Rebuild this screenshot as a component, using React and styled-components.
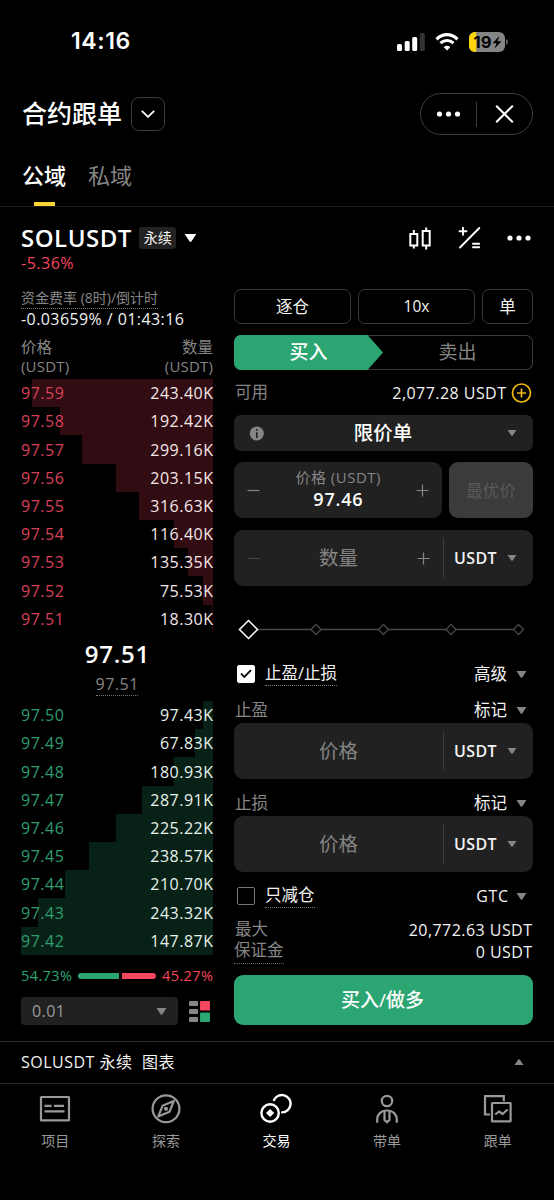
import React from "react";
import styled, { createGlobalStyle } from "styled-components";

const GlobalStyle = createGlobalStyle`
  * {
    box-sizing: border-box;
  }
  body {
    margin: 0;
    background: #000;
  }
`;

const colors = {
  green: "#2ba572",
  red: "#f6465d",
  gray: "#858585",
  panel: "#212121",
  line: "#3a3a3a",
};

const Page = styled.div`
  width: 554px;
  height: 1200px;
  overflow: hidden;
  background: #000;
  color: #f2f2f2;
  font-family: "Open Sans", "Noto Sans CJK SC", sans-serif;
  font-size: 16px;
  line-height: 1;
  white-space: nowrap;
`;

const Text = styled.span`
  display: inline-block;
  font-size: ${(p) => p.$size || 16}px;
  font-weight: ${(p) => p.$weight || 400};
  color: ${(p) => p.$color || "inherit"};
  letter-spacing: ${(p) => p.$spacing || 0}px;
  margin-right: ${(p) => -(p.$spacing || 0)}px;
`;

const Dotted = styled.span`
  display: inline-flex;
  align-items: center;
  height: ${(p) => p.$height || 22}px;
  padding-bottom: ${(p) => p.$lift || 0}px;
  border-bottom: 1px dotted ${(p) => p.$line || "#777"};
`;

const StatusBar = styled.header`
  display: flex;
  align-items: center;
  justify-content: space-between;
  height: 83px;
  padding: 0 46px 0 71px;
  font-family: Inter, sans-serif;
`;

const StatusIcons = styled.div`
  display: flex;
  align-items: center;
  gap: 10px;
`;

const TitleBar = styled.div`
  display: flex;
  align-items: center;
  justify-content: space-between;
  height: 62px;
  padding: 0 21px 0 22px;
`;

const Title = styled.div`
  display: flex;
  align-items: center;
  gap: 9px;
  > span {
    padding-bottom: 2px;
  }
`;

const SquareButton = styled.button`
  display: flex;
  align-items: center;
  justify-content: center;
  width: 34px;
  height: 34px;
  padding: 0;
  border: 1px solid #3d3d3d;
  border-radius: 8px;
  background: none;
`;

const Capsule = styled.div`
  display: flex;
  align-items: center;
  width: 113px;
  height: 42px;
  border: 1px solid #3d3d3d;
  border-radius: 21px;
  > svg {
    flex: 1;
  }
`;

const CapsuleLine = styled.i`
  width: 1px;
  height: 25px;
  background: #3d3d3d;
`;

const Tabs = styled.nav`
  display: flex;
  gap: 22px;
  height: 62px;
  padding-left: 22px;
  border-bottom: 1px solid #1c1c1c;
`;

const Tab = styled.div`
  display: flex;
  flex-direction: column;
  align-items: center;
  justify-content: space-between;
  padding-top: 19px;
  color: ${(p) => (p.$active ? "#fff" : colors.gray)};
  &::after {
    content: "";
    width: 21px;
    height: 4px;
    background: ${(p) => (p.$active ? "#fcd535" : "none")};
  }
`;

const SymbolBar = styled.div`
  display: flex;
  justify-content: space-between;
  height: 82px;
  padding: 18px 23px 0 21px;
`;

const SymbolName = styled.div`
  display: flex;
  align-items: center;
  height: 26px;
  gap: 8px;
`;

const Badge = styled.span`
  display: flex;
  align-items: center;
  justify-content: center;
  width: 37px;
  height: 22px;
  border-radius: 3px;
  background: #222;
`;

const Change = styled.div`
  display: flex;
  align-items: center;
  height: 24px;
`;

const Tools = styled.div`
  display: flex;
  align-items: center;
  height: 26px;
  gap: 26px;
`;

const Columns = styled.main`
  display: flex;
  height: 752px;
  padding: 0 21px;
  gap: 21px;
`;

const Book = styled.section`
  width: 192px;
`;

const Line = styled.div`
  display: flex;
  align-items: center;
  justify-content: ${(p) => (p.$center ? "center" : "space-between")};
  height: ${(p) => p.$height}px;
  margin-top: ${(p) => p.$top || 0}px;
  margin-bottom: ${(p) => p.$bottom || 0}px;
  padding: 0 ${(p) => p.$right || 0}px 0 ${(p) => p.$left || 0}px;
`;

const Depth = styled.div`
  display: flex;
  align-items: center;
  justify-content: space-between;
  height: ${(p) => p.$height}px;
  color: ${(p) => (p.$ask ? "#d9415a" : "#2d9e70")};
  background: linear-gradient(
      ${(p) => (p.$ask ? "#310c12, #310c12" : "#082117, #082117")}
    )
    right / ${(p) => p.$width}px 100% no-repeat;
  b {
    color: ${(p) => (p.$ask ? "#f5e6e8" : "#e6f2ec")};
    font-weight: 400;
  }
`;

const Ratio = styled.div`
  display: flex;
  align-items: center;
  height: 42px;
`;

const RatioBar = styled.div`
  display: flex;
  flex: 1;
  gap: 3px;
  margin: 0 6px;
  height: 6px;
`;

const RatioPart = styled.i`
  flex: ${(p) => p.$share};
  background: ${(p) => p.$color};
  border-radius: ${(p) => (p.$end ? "0 3px 3px 0" : "3px 0 0 3px")};
`;

const StepSelect = styled.div`
  display: flex;
  align-items: center;
  justify-content: space-between;
  width: 157px;
  height: 28px;
  padding: 0 11px;
  border-radius: 4px;
  background: ${colors.panel};
  color: #999;
`;

const Form = styled.section`
  width: 299px;
`;

const Modes = styled.div`
  display: grid;
  grid-template-columns: 117px 117px 51px;
  gap: 7px;
`;

const ModeButton = styled.button`
  display: flex;
  align-items: center;
  justify-content: center;
  height: 35px;
  padding: 0 0 1px;
  border: 1px solid ${colors.line};
  border-radius: 7px;
  background: none;
  color: #f2f2f2;
  font-family: inherit;
`;

const Sides = styled.div`
  display: flex;
  height: 35px;
  margin-top: 11px;
  border-radius: 7px;
  box-shadow: inset 0 0 0 1px ${colors.line};
`;

const Side = styled.div`
  display: flex;
  align-items: center;
  justify-content: center;
  width: 149px;
  color: ${(p) => (p.$active ? "#fff" : colors.gray)};
  background: ${(p) => (p.$active ? colors.green : "none")};
  border-radius: 7px 0 0 7px;
  clip-path: ${(p) =>
    p.$active
      ? "polygon(0 0, 133.5px 0, 100% 50%, 133.5px 100%, 0 100%)"
      : "none"};
`;

const Value = styled.div`
  display: flex;
  align-items: center;
  gap: ${(p) => p.$gap || 6}px;
`;

const OrderType = styled.div`
  display: grid;
  grid-template-columns: 1fr auto 1fr;
  align-items: center;
  height: 36px;
  padding: 0 16px 0 15px;
  border-radius: 7px;
  background: ${colors.panel};
  > :last-child {
    justify-self: end;
  }
`;

const PriceRow = styled.div`
  display: flex;
  gap: 7px;
  margin-top: 11px;
`;

const Field = styled.div`
  display: flex;
  align-items: center;
  width: ${(p) => (p.$narrow ? "208px" : "auto")};
  height: 56px;
  margin-top: ${(p) => p.$top || 0}px;
  border-radius: 9px;
  background: ${colors.panel};
`;

const FieldBody = styled.div`
  display: flex;
  align-items: center;
  justify-content: ${(p) => (p.$center ? "center" : "space-between")};
  width: 209px;
  padding: 0 13px;
`;

const PriceText = styled.div`
  display: flex;
  flex-direction: column;
  align-items: center;
  gap: 5px;
  padding-bottom: 2px;
`;

const Unit = styled.div`
  display: flex;
  align-items: center;
  justify-content: space-between;
  flex: 1;
  height: 40px;
  padding: 0 16px 0 10px;
  border-left: 1px solid #3d3d3d;
`;

const BestPrice = styled.button`
  flex: 1;
  padding: 0;
  border: 0;
  border-radius: 9px;
  background: #3b3b3b;
  font-family: inherit;
`;

const Checkbox = styled.span`
  display: flex;
  align-items: center;
  justify-content: center;
  width: 18px;
  height: 18px;
  margin-left: 3px;
  border: 1px solid ${(p) => (p.$checked ? "#fff" : "#777")};
  border-radius: 2px;
  background: ${(p) => (p.$checked ? "#fff" : "none")};
`;

const Submit = styled.button`
  display: block;
  width: 100%;
  height: 50px;
  margin-top: 11px;
  padding: 0 2px 2px 0;
  border: 0;
  border-radius: 9px;
  background: ${colors.green};
  color: #fff;
  font-family: inherit;
`;

const ChartBar = styled.div`
  display: flex;
  align-items: center;
  justify-content: space-between;
  height: 43px;
  padding: 0 30px 1px 21px;
  border-top: 1px solid #2e2e2e;
  border-bottom: 1px solid #2e2e2e;
`;

const BottomNav = styled.footer`
  display: grid;
  grid-template-columns: repeat(5, 1fr);
  padding-right: 1px;
`;

const NavItem = styled.div`
  display: flex;
  flex-direction: column;
  align-items: center;
  gap: 9px;
  padding-top: 9px;
  color: ${(p) => (p.$active ? "#fff" : "#999")};
  svg {
    fill: none;
    stroke: currentColor;
    stroke-width: 2.2;
  }
`;

const Caret = ({ w = 10, h = 6, color = "#858585", up }) => (
  <svg width={w} height={h} viewBox="0 0 10 6" preserveAspectRatio="none">
    <path
      d={up ? "M.5 6h9L5.7.4Q5 0 4.3.4Z" : "M.5 0h9L5.7 5.6Q5 6 4.3 5.6Z"}
      fill={color}
    />
  </svg>
);

const Dots = ({ width = 24 }) => (
  <svg width={width} height="6" viewBox="0 0 24 6" fill="#fff">
    <circle cx="3" cy="3" r="2.6" />
    <circle cx="12" cy="3" r="2.6" />
    <circle cx="21" cy="3" r="2.6" />
  </svg>
);

const Minus = ({ color = "#858585" }) => (
  <svg width="13" height="13">
    <path d="M.5 6.5h12" stroke={color} strokeWidth="1.2" />
  </svg>
);

const Plus = () => (
  <svg width="13" height="13">
    <path d="M.5 6.5h12M6.5.5v12" stroke="#858585" strokeWidth="1.2" />
  </svg>
);

const Status = () => (
  <StatusIcons>
    <svg width="28" height="18" fill="#fff">
      <rect x="0" y="11" width="5" height="7" rx="1.5" />
      <rect x="7.7" y="8" width="5" height="10" rx="1.5" />
      <rect x="15.2" y="4" width="5" height="14" rx="1.5" />
      <rect x="22.8" y="0" width="5" height="18" rx="1.5" fill="#333" />
    </svg>
    <svg width="24" height="18" viewBox="0 0 24 18">
      <g fill="none" stroke="#fff" strokeWidth="3.2">
        <path d="M1.5 6.2Q6.4 1.7 12 1.7t10.5 4.5" />
        <path d="M5.5 10.2Q8.4 7.5 12 7.5t6.5 2.7" />
      </g>
      <path d="M12 17.4 8.7 14.1Q12 11.3 15.3 14.1Z" fill="#fff" />
    </svg>
    <svg width="39" height="20" viewBox="0 0 39 20">
      <rect width="36" height="20" rx="6" fill="#858585" />
      <path d="M7.2 0H6a6 6 0 0 0-6 6v8a6 6 0 0 0 6 6h1.2Z" fill="#fbd40b" />
      <path d="M37.3 7q1.5 1 1.5 3t-1.5 3Z" fill="#858585" />
      <text
        x="4.5"
        y="15.8"
        fontFamily="Inter"
        fontSize="16"
        fontWeight="700"
        textLength="18"
        lengthAdjust="spacingAndGlyphs"
      >
        19
      </text>
      <path d="m30.5 4-7 7.2h4l-2 5.3 7-7.2h-4Z" />
    </svg>
  </StatusIcons>
);

const asks = [
  ["97.59", "243.40K", 181],
  ["97.58", "192.42K", 153],
  ["97.57", "299.16K", 131],
  ["97.56", "203.15K", 97.5],
  ["97.55", "316.63K", 74.5],
  ["97.54", "116.40K", 39],
  ["97.53", "135.35K", 25.5],
  ["97.52", "75.53K", 10.5],
  ["97.51", "18.30K", 1],
];

const bids = [
  ["97.50", "97.43K", 10.5],
  ["97.49", "67.83K", 18.3],
  ["97.48", "180.93K", 39],
  ["97.47", "287.91K", 71.5],
  ["97.46", "225.22K", 97],
  ["97.45", "238.57K", 124],
  ["97.44", "210.70K", 148],
  ["97.43", "243.32K", 175],
  ["97.42", "147.87K", 192],
];

// rows are 28.2px on average, snapped to whole pixels so the bars join
const rowHeight = (i) => Math.round((i + 1) * 28.2) - Math.round(i * 28.2);

const DepthRows = ({ rows, ask }) =>
  rows.map(([price, amount, width], i) => (
    <Depth key={price} $ask={ask} $width={width} $height={rowHeight(i)}>
      <Text $spacing={0.5}>{price}</Text>
      <b>
        <Text $spacing={0.5}>{amount}</Text>
      </b>
    </Depth>
  ));

const OrderBook = () => (
  <Book>
    <Line $height={20}>
      <Dotted $height={20} $lift={1}>
        <Text $size={14} $color={colors.gray}>
          资金费率 (8时)/倒计时
        </Text>
      </Dotted>
    </Line>
    <Line $height={20}>
      <Text $spacing={0.42}>-0.03659% / 01:43:16</Text>
    </Line>
    <Line $height={22} $top={8}>
      <Text $size={15.5} $color={colors.gray}>
        价格
      </Text>
      <Text $size={15.5} $color={colors.gray}>
        数量
      </Text>
    </Line>
    <Line $height={15} $bottom={5}>
      <Text $size={15} $color={colors.gray} $spacing={0.2}>
        (USDT)
      </Text>
      <Text $size={15} $color={colors.gray} $spacing={0.2}>
        (USDT)
      </Text>
    </Line>
    <DepthRows rows={asks} ask />
    <Line $center $height={42}>
      <Text $size={24} $weight={600} $color="#fff" $spacing={0.8}>
        97.51
      </Text>
    </Line>
    <Line $center $height={21}>
      <Dotted $height={21} $lift={2}>
        <Text $color={colors.gray} $spacing={0.5}>
          97.51
        </Text>
      </Dotted>
    </Line>
    <Line $height={5} />
    <DepthRows rows={bids} />
    <Ratio>
      <Text $size={14.5} $color={colors.green} $spacing={0.4}>
        54.73%
      </Text>
      <RatioBar>
        <RatioPart $share={54.73} $color={colors.green} />
        <RatioPart $share={45.27} $color={colors.red} $end />
      </RatioBar>
      <Text $size={14.5} $color={colors.red} $spacing={0.4}>
        45.27%
      </Text>
    </Ratio>
    <Line $height={28} $right={3}>
      <StepSelect>
        <Text $spacing={0.4}>0.01</Text>
        <Caret w={11} h={7} />
      </StepSelect>
      <svg width="21" height="21">
        <g fill="#858585">
          <rect width="9" height="5" rx="1" />
          <rect y="8" width="9" height="5" rx="1" />
          <rect y="16" width="9" height="5" rx="1" />
        </g>
        <rect x="11" width="10" height="9.5" rx="1" fill={colors.red} />
        <rect x="11" y="11.5" width="10" height="9.5" rx="1" fill={colors.green} />
      </svg>
    </Line>
  </Book>
);

const Trigger = ({ label }) => (
  <>
    <Text $size={16.5} $color={colors.gray}>
      {label}
    </Text>
    <Value $gap={9}>
      <Text $size={16.5}>标记</Text>
      <Caret w={11} h={7} />
    </Value>
  </>
);

const UnitSelect = () => (
  <Unit>
    <Text $size={16} $weight={600} $spacing={0.4}>
      USDT
    </Text>
    <Caret />
  </Unit>
);

const TriggerField = () => (
  <Field>
    <FieldBody $center>
      <Text $size={19.5} $color={colors.gray}>
        价格
      </Text>
    </FieldBody>
    <UnitSelect />
  </Field>
);

const Slider = () => (
  <svg width="299" height="21" fill="#000" stroke="#484848" strokeWidth="1.3">
    <path d="M24 10.5h256" />
    {[82, 149.5, 217, 284.5].map((x) => (
      <path key={x} d={`m${x} 5.5 5 5-5 5-5-5Z`} />
    ))}
    <path d="m14.5 1.5 9 9-9 9-9-9Z" stroke="#fff" strokeWidth="1.5" />
  </svg>
);

const OrderForm = () => (
  <Form>
    <Modes>
      <ModeButton>
        <Text $size={16.5}>逐仓</Text>
      </ModeButton>
      <ModeButton>
        <Text $size={15.5}>10x</Text>
      </ModeButton>
      <ModeButton>
        <Text $size={16.5}>单</Text>
      </ModeButton>
    </Modes>
    <Sides>
      <Side $active>
        <Text $size={19} $weight={500}>
          买入
        </Text>
      </Side>
      <Side>
        <Text $size={19}>卖出</Text>
      </Side>
    </Sides>
    <Line $height={45} $left={1} $right={1}>
      <Text $size={16.5} $color={colors.gray}>
        可用
      </Text>
      <Value $gap={5}>
        <Text $spacing={0.45}>2,077.28 USDT</Text>
        <svg width="21" height="20" fill="none" stroke="#f0b90b" strokeWidth="1.7">
          <circle cx="10.5" cy="10" r="9" />
          <path d="M6 10h9M10.5 5.5v9" />
        </svg>
      </Value>
    </Line>
    <OrderType>
      <svg width="15" height="15">
        <circle cx="7.8" cy="7.5" r="7" fill="#858585" />
        <path d="M7.8 3v1.8M7.8 6.2V12" stroke="#212121" strokeWidth="1.6" />
      </svg>
      <Text $size={19.5} $weight={500} $color="#fff">
        限价单
      </Text>
      <Caret />
    </OrderType>
    <PriceRow>
      <Field $narrow>
        <FieldBody>
          <Minus />
          <PriceText>
            <Text $size={15} $color={colors.gray} $spacing={0.5}>
              价格 (USDT)
            </Text>
            <Text $size={18} $weight={600} $color="#fff" $spacing={0.8}>
              97.46
            </Text>
          </PriceText>
          <Plus />
        </FieldBody>
      </Field>
      <BestPrice>
        <Text $size={16.5} $color="#595959">
          最优价
        </Text>
      </BestPrice>
    </PriceRow>
    <Field $top={12}>
      <FieldBody>
        <Minus color="#424242" />
        <Text $size={19.5} $color={colors.gray}>
          数量
        </Text>
        <Plus />
      </FieldBody>
      <UnitSelect />
    </Field>
    <Line $height={21} $top={33}>
      <Slider />
    </Line>
    <Line $height={24} $top={22} $right={6}>
      <Value $gap={10}>
        <Checkbox $checked>
          <svg width="12" height="10" fill="none" stroke="#000" strokeWidth="1.8">
            <path d="m1 4.5 3.3 3.5L11 1.2" />
          </svg>
        </Checkbox>
        <Dotted $height={24}>
          <Text $size={16.5}>止盈/止损</Text>
        </Dotted>
      </Value>
      <Value $gap={9}>
        <Text $size={16.5}>高级</Text>
        <Caret w={11} h={7} />
      </Value>
    </Line>
    <Line $height={24} $top={12} $left={1} $right={6}>
      <Trigger label="止盈" />
    </Line>
    <Line $height={1} />
    <TriggerField />
    <Line $height={24} $top={12} $left={1} $right={6}>
      <Trigger label="止损" />
    </Line>
    <Line $height={1} />
    <TriggerField />
    <Line $height={24} $top={12} $right={6}>
      <Value $gap={10}>
        <Checkbox />
        <Dotted $height={24} $lift={1}>
          <Text $size={16.5}>只减仓</Text>
        </Dotted>
      </Value>
      <Value $gap={8}>
        <Text $spacing={0.6}>GTC</Text>
        <Caret w={11} h={7} />
      </Value>
    </Line>
    <Line $height={21} $top={11} $left={1} $right={1}>
      <Text $size={16.5} $color={colors.gray}>
        最大
      </Text>
      <Text $spacing={0.45}>20,772.63 USDT</Text>
    </Line>
    <Line $height={24} $right={1}>
      <Dotted $height={24} $line="#666" $lift={2}>
        <Text $size={16.5} $color={colors.gray}>
          保证金
        </Text>
      </Dotted>
      <Text $spacing={0.4}>0 USDT</Text>
    </Line>
    <Submit>
      <Text $size={19} $weight={500}>
        买入/做多
      </Text>
    </Submit>
  </Form>
);

const navItems = [
  {
    label: "项目",
    icon: (
      <>
        <rect x="2" y="4" width="28" height="23.4" rx="0.5" />
        <path d="M5.5 12.8h7M15 12.8h10M5.5 18.3h20" />
      </>
    ),
  },
  {
    label: "探索",
    icon: (
      <>
        <circle cx="16" cy="15.8" r="13.4" />
        <path d="M23.8 8 19.5 18.8 8.2 23.6 12.5 12.8Z" strokeLinejoin="round" />
        <circle cx="16" cy="15.8" r="1" />
      </>
    ),
  },
  {
    label: "交易",
    active: true,
    icon: (
      <>
        <circle cx="10.1" cy="20" r="8.7" strokeWidth="2.4" />
        <path
          d="M14 7a8.7 8.7 0 1 1 8.2 12.4"
          strokeWidth="2.4"
          strokeLinecap="round"
        />
        <path d="m10.1 15.9 4.1 4.1-4.1 4.1L6 20Z" fill="#fff" stroke="none" />
      </>
    ),
  },
  {
    label: "带单",
    icon: (
      <>
        <circle cx="16" cy="8" r="5.2" />
        <path d="M6.2 29.7v-3.2a9 9 0 0 1 9-9h1.6a9 9 0 0 1 9 9v3.2" />
        <path d="M13.5 18v9l2.5 2.2 2.5-2.2v-9" />
      </>
    ),
  },
  {
    label: "跟单",
    icon: (
      <>
        <path d="M8 21.5H3V3.2h18.8v5" />
        <rect x="10" y="10" width="18.6" height="18.4" rx="0.5" />
        <path d="m13.2 21.5 3.8-3 3.6 2.5 5-4.5" strokeLinejoin="round" />
      </>
    ),
  },
];

const App = () => {
  return (
    <Page>
      <GlobalStyle />
      <StatusBar>
        <Text $size={23} $weight={600} $color="#fff" $spacing={0.6}>
          14:16
        </Text>
        <Status />
      </StatusBar>
      <TitleBar>
        <Title>
          <Text $size={25} $weight={500} $color="#fff">
            合约跟单
          </Text>
          <SquareButton>
            <svg width="14" height="8" fill="none" stroke="#fff" strokeWidth="1.8">
              <path d="m.8.8 6.2 6L13.2.8" />
            </svg>
          </SquareButton>
        </Title>
        <Capsule>
          <Dots />
          <CapsuleLine />
          <svg width="18" height="18" viewBox="0 0 18 18">
            <path d="m.7.7 16.6 16.6M17.3.7.7 17.3" stroke="#fff" strokeWidth="2" />
          </svg>
        </Capsule>
      </TitleBar>
      <Tabs>
        <Tab $active>
          <Text $size={22} $weight={500}>
            公域
          </Text>
        </Tab>
        <Tab>
          <Text $size={22}>私域</Text>
        </Tab>
      </Tabs>
      <SymbolBar>
        <div>
          <SymbolName>
            <Text $size={24} $weight={600} $color="#fff" $spacing={0.5}>
              SOLUSDT
            </Text>
            <Badge>
              <Text $size={14}>永续</Text>
            </Badge>
            <Caret w={13} h={8} color="#fff" />
          </SymbolName>
          <Change>
            <Text $color={colors.red} $spacing={0.5}>
              -5.36%
            </Text>
          </Change>
        </div>
        <Tools>
          <svg width="24" height="24" fill="none" stroke="#fff" strokeWidth="2">
            <path d="M3.3 8h7v11.5h-7ZM6.8 4v4M6.8 19.5V22.5M15.7 5h7v14.5h-7ZM19.2 1.5V5M19.2 19.5v4" />
          </svg>
          <svg
            width="24"
            height="24"
            fill="none"
            stroke="#fff"
            strokeWidth="1.9"
            strokeLinecap="round"
          >
            <path d="M3 21.5 22.3 2M2.5 5.2h7M6 1.8v7M16 17.7h6.2M16 21.3h6.2" />
          </svg>
          <Dots />
        </Tools>
      </SymbolBar>
      <Columns>
        <OrderBook />
        <OrderForm />
      </Columns>
      <ChartBar>
        <Text $spacing={0.5}>SOLUSDT 永续&nbsp; 图表</Text>
        <Caret up />
      </ChartBar>
      <BottomNav>
        {navItems.map(({ label, icon, active }) => (
          <NavItem key={label} $active={active}>
            <svg width="32" height="32">
              {icon}
            </svg>
            <Text $size={14}>{label}</Text>
          </NavItem>
        ))}
      </BottomNav>
    </Page>
  );
};

export default App;
